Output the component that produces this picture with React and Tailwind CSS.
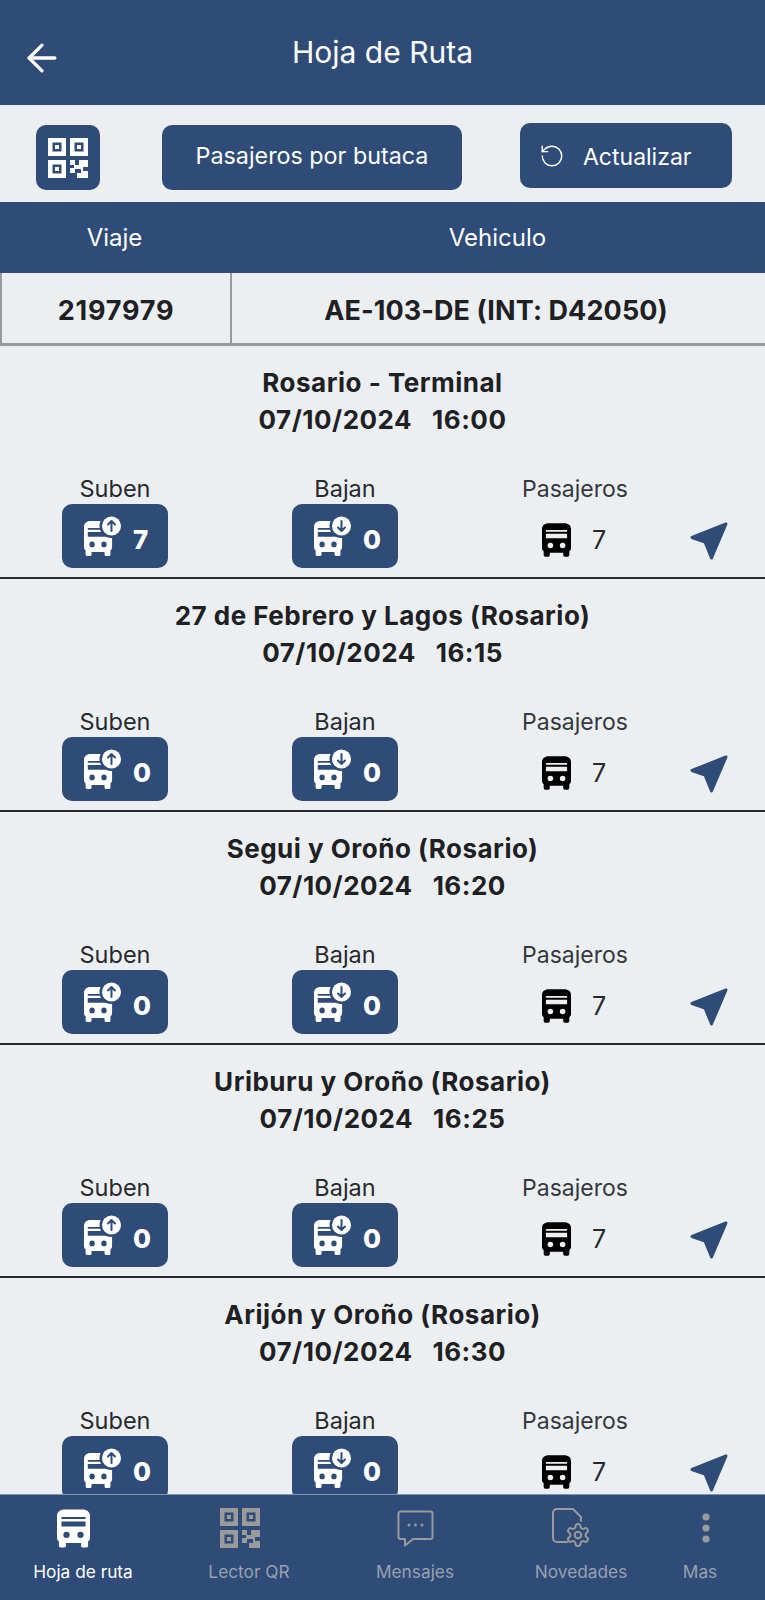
import React from 'react'
import { ArrowLeft, RotateCcw } from 'lucide-react'

const stops = [
  { name: 'Rosario - Terminal', time: '16:00', up: 7 },
  { name: '27 de Febrero y Lagos (Rosario)', time: '16:15', up: 0 },
  { name: 'Segui y Oroño (Rosario)', time: '16:20', up: 0 },
  { name: 'Uriburu y Oroño (Rosario)', time: '16:25', up: 0 },
  { name: 'Arijón y Oroño (Rosario)', time: '16:30', up: 0 },
]

const BUS_PATH =
  'M6 0H20C23.5 0 26 2 26 5V22C26 23.5 25.5 24.5 24.5 25V28.5A1.5 1.5 0 0 1 23 30H20.5A1.5 1.5 0 0 1 19 28.5V26.5H7V28.5A1.5 1.5 0 0 1 5.5 30H3A1.5 1.5 0 0 1 1.5 28.5V25C.5 24.5 0 23.5 0 22V5C0 2 2.5 0 6 0Z' +
  'M3.5 6V7.5H22.5V6Z' +
  'M3.5 9.5V13.5H22.5V9.5Z' +
  'M7.5 17.5A2.5 2.5 0 1 0 7.5 22.5A2.5 2.5 0 1 0 7.5 17.5Z' +
  'M18.5 17.5A2.5 2.5 0 1 0 18.5 22.5A2.5 2.5 0 1 0 18.5 17.5Z'

const BusIcon = ({ className }) => (
  <svg viewBox="0 0 26 30" className={className} fill="currentColor">
    <path fillRule="evenodd" d={BUS_PATH} />
  </svg>
)

// bus with the round arrow badge, used in the Suben / Bajan buttons
const BusBadgeIcon = ({ down }) => (
  <svg viewBox="0 0 38 40" className="w-[38px] h-[40px] text-white" fill="currentColor">
    <g transform="translate(0 5)">
      <path fillRule="evenodd" transform="scale(1.08 1.17)" d={BUS_PATH} />
    </g>
    <circle cx="27.5" cy="10" r="12" fill="#2f4b78" />
    <circle cx="27.5" cy="10" r="9.5" fill="white" />
    <g stroke="#2f4b78" strokeWidth="2" fill="none" strokeLinecap="round" strokeLinejoin="round">
      {down ? (
        <path d="M27.5 5V14.5M24 11.5L27.5 15L31 11.5" />
      ) : (
        <path d="M27.5 15V5.5M24 8.5L27.5 5L31 8.5" />
      )}
    </g>
  </svg>
)

const QrIcon = ({ className }) => (
  <svg viewBox="0 0 40 40" className={className} fill="currentColor">
    <path
      fillRule="evenodd"
      d="M0 0H18V18H0ZM4.5 4.5V13.5H13.5V4.5ZM7 7H11V11H7Z M22 0H40V18H22ZM26.5 4.5V13.5H35.5V4.5ZM29 7H33V11H29Z M0 22H18V40H0ZM4.5 26.5V35.5H13.5V26.5ZM7 29H11V33H7Z"
    />
    <path d="M22 22H27V27H31V22H40V29H35V33H40V40H29V35H33V31H27V35H22V30H26V27H22Z" />
  </svg>
)

const NavArrow = () => (
  <svg viewBox="0 0 38 38" className="w-[38px] h-[38px] text-[#2f4b78]" fill="currentColor" stroke="currentColor" strokeWidth="3" strokeLinejoin="round">
    <path d="M36 2L2 15.5L15 20L21.5 36Z" />
  </svg>
)

const MessageIcon = ({ className }) => (
  <svg viewBox="0 0 37 37" className={className} fill="none" stroke="currentColor" strokeWidth="2">
    <path d="M3.5 1.5H33.5A2 2 0 0 1 35.5 3.5V27A2 2 0 0 1 33.5 29H16L8 35.5V29H3.5A2 2 0 0 1 1.5 27V3.5A2 2 0 0 1 3.5 1.5Z" strokeLinejoin="round" />
    <g fill="currentColor" stroke="none">
      <circle cx="12" cy="15" r="1.5" />
      <circle cx="18.5" cy="15" r="1.5" />
      <circle cx="25" cy="15" r="1.5" />
    </g>
  </svg>
)

const ReportIcon = ({ className }) => (
  <svg viewBox="0 0 40 40" className={className} fill="none" stroke="currentColor" strokeWidth="2" strokeLinecap="round" strokeLinejoin="round">
    <path d="M29 13V9L21 1H5A4 4 0 0 0 1 5V30A4 4 0 0 0 5 34H15" />
    <g transform="translate(12.8 13.8) scale(1.1)" strokeWidth="1.8">
      <path d="M12.22 2h-.44a2 2 0 0 0-2 2v.18a2 2 0 0 1-1 1.73l-.43.25a2 2 0 0 1-2 0l-.15-.08a2 2 0 0 0-2.73.73l-.22.38a2 2 0 0 0 .73 2.73l.15.1a2 2 0 0 1 1 1.72v.51a2 2 0 0 1-1 1.74l-.15.09a2 2 0 0 0-.73 2.73l.22.38a2 2 0 0 0 2.73.73l.15-.08a2 2 0 0 1 2 0l.43.25a2 2 0 0 1 1 1.73V20a2 2 0 0 0 2 2h.44a2 2 0 0 0 2-2v-.18a2 2 0 0 1 1-1.73l.43-.25a2 2 0 0 1 2 0l.15.08a2 2 0 0 0 2.73-.73l.22-.39a2 2 0 0 0-.73-2.73l-.15-.08a2 2 0 0 1-1-1.74v-.5a2 2 0 0 1 1-1.74l.15-.09a2 2 0 0 0 .73-2.73l-.22-.38a2 2 0 0 0-2.73-.73l-.15.08a2 2 0 0 1-2 0l-.43-.25a2 2 0 0 1-1-1.73V4a2 2 0 0 0-2-2z" />
      <circle cx="12" cy="12" r="3" />
    </g>
  </svg>
)

const DotsIcon = ({ className }) => (
  <svg viewBox="0 0 8 30" className={className} fill="currentColor">
    <circle cx="4" cy="4" r="3.6" />
    <circle cx="4" cy="15" r="3.6" />
    <circle cx="4" cy="26" r="3.6" />
  </svg>
)

const CountButton = ({ down, value }) => (
  <button className="w-[106px] h-[64px] rounded-[10px] bg-[#2f4b78] text-white flex items-center pl-[22px] gap-[11px]">
    <BusBadgeIcon down={down} />
    <span className="pt-[8px] text-[26px] font-extrabold leading-none">{value}</span>
  </button>
)

const Stop = ({ name, time, up }) => (
  <div className="h-[233px] shrink-0 border-b-2 border-[#26292d] pt-[18px]">
    <div className="text-center text-[26px] leading-[37px] font-bold text-[#1e2024] tracking-[0.5px]">
      <p>{name}</p>
      <p className="whitespace-pre">{`07/10/2024   ${time}`}</p>
    </div>
    <div className="grid grid-cols-[230px_230px_230px_75px] mt-[34px]">
      <div className="flex flex-col items-center">
        <span className="pt-[2px] text-[23.5px] leading-[30px] text-[#26292d]">Suben</span>
        <CountButton value={up} />
      </div>
      <div className="flex flex-col items-center">
        <span className="pt-[2px] text-[23.5px] leading-[30px] text-[#26292d]">Bajan</span>
        <CountButton down value={0} />
      </div>
      <div className="flex flex-col items-center">
        <span className="pt-[2px] text-[23px] leading-[30px] text-[#35383d]">Pasajeros</span>
        <div className="h-[64px] pt-[8px] pr-[2px] flex items-center gap-[21px] text-black">
          <BusIcon className="w-[29px] h-[34px]" />
          <span className="text-[25px] leading-none text-[#26292d]">7</span>
        </div>
      </div>
      <div className="self-end mb-[8px]">
        <NavArrow />
      </div>
    </div>
  </div>
)

const NavItem = ({ icon, label, active, width, iconShift }) => (
  <div className={`flex flex-col items-center ${width} ${active ? 'text-white' : 'text-[#98a1ae]'}`}>
    <div className={`h-[40px] flex items-center ${iconShift}`}>{icon}</div>
    <span className="mt-[13px] text-[17.3px] leading-[22px] whitespace-nowrap">{label}</span>
  </div>
)

export default function App() {
  return (
    <div className="h-[1600px] w-[765px] flex flex-col overflow-hidden bg-[#eceff1] font-['Inter',sans-serif]">
      <header className="h-[105px] shrink-0 bg-[#2f4b78] text-white grid grid-cols-[1fr_auto_1fr]">
        <div className="pl-[20px] pt-[36px]">
          <ArrowLeft size={44} strokeWidth={1.8} />
        </div>
        <h1 className="pt-[33px] text-[30px] leading-[38px] font-normal">Hoja de Ruta</h1>
      </header>

      <div className="h-[97px] shrink-0 flex items-start text-white pt-[20px]">
        <button className="ml-[36px] w-[64px] h-[65px] rounded-[10px] bg-[#2f4b78] flex items-center justify-center">
          <QrIcon className="w-[40px] h-[40px]" />
        </button>
        <button className="ml-[62px] w-[300px] h-[65px] rounded-[10px] bg-[#2f4b78] text-[23.3px] pb-[2px]">
          Pasajeros por butaca
        </button>
        <button className="ml-[58px] -mt-[2px] w-[212px] h-[65px] rounded-[10px] bg-[#2f4b78] text-[23px] flex items-center pl-[19px] gap-[18px]">
          <RotateCcw size={26} strokeWidth={1.3} />
          <span className="pt-[3px]">Actualizar</span>
        </button>
      </div>

      <div className="shrink-0 grid grid-cols-[232px_1fr]">
        <div className="h-[71px] bg-[#2f4b78] text-white text-[24px] pr-[3px] flex items-center justify-center">Viaje</div>
        <div className="h-[71px] bg-[#2f4b78] text-white text-[24px] pr-[2px] flex items-center justify-center">Vehiculo</div>
        <div className="h-[73px] pt-[6px] border-l-2 border-r-2 border-b-[3px] border-[#9a9a9a] text-[27px] tracking-[0.8px] font-bold text-[#1e2024] flex items-center justify-center">2197979</div>
        <div className="h-[73px] pt-[6px] pr-[5px] border-b-[3px] border-[#9a9a9a] text-[27px] tracking-[0.1px] font-bold text-[#1e2024] flex items-center justify-center">AE-103-DE (INT: D42050)</div>
      </div>

      <main className="flex-1 min-h-0 overflow-hidden">
        {stops.map((stop) => (
          <Stop key={stop.name} {...stop} />
        ))}
      </main>

      <nav className="h-[106px] shrink-0 bg-[#2f4b78] border-t border-[#8095b5] flex pt-[13px]">
        <NavItem active width="w-[166px]" iconShift="mr-[20px]" label="Hoja de ruta" icon={<BusIcon className="w-[33px] h-[39px]" />} />
        <NavItem width="w-[166px]" iconShift="mr-[18px]" label="Lector QR" icon={<QrIcon className="w-[40px] h-[40px] text-[#9a9a9a]" />} />
        <NavItem width="w-[166px]" label="Mensajes" icon={<MessageIcon className="w-[37px] h-[37px] text-[#9a9a9a]" />} />
        <NavItem width="w-[166px]" iconShift="mr-[18px]" label="Novedades" icon={<ReportIcon className="w-[40px] h-[40px] text-[#9a9a9a]" />} />
        <NavItem width="w-[72px]" iconShift="ml-[12px]" label="Mas" icon={<DotsIcon className="w-[8px] h-[30px] text-[#9a9a9a]" />} />
      </nav>
    </div>
  )
}
